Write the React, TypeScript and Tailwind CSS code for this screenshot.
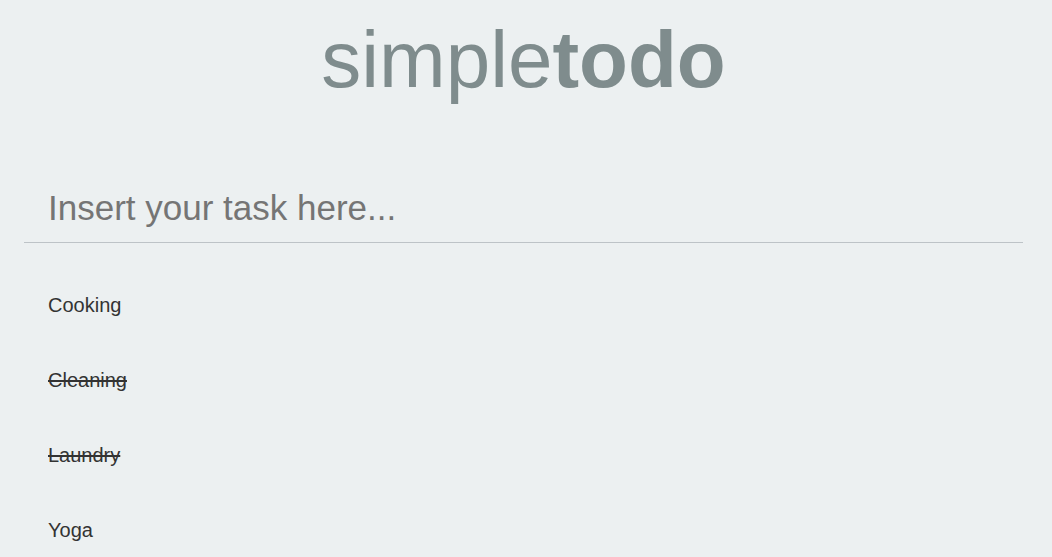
export default function App() {
  const tasks = [
    { name: "Cooking", done: false },
    { name: "Cleaning", done: true },
    { name: "Laundry", done: true },
    { name: "Yoga", done: false },
  ];

  return (
    <div className="min-h-screen bg-[#ecf0f1] pr-[5px] font-['Liberation_Sans',Arial,sans-serif]">
      {/* Title */}
      <h1 className="pt-[14px] text-center text-[80px] leading-[92px] text-[#7f8c8d]">
        simple<span className="font-bold">todo</span>
      </h1>

      <div className="mx-6 mt-[82px]">
        {/* Input */}
        <input
          type="text"
          placeholder="Insert your task here..."
          className="w-full border-b border-[#bdc3c7] bg-transparent px-6 pb-[14px] text-[35px] leading-[40px] text-[#333] outline-none placeholder:text-[#757575]"
        />

        {/* Tasks */}
        <ul className="mt-[50px]">
          {tasks.map((t) => (
            <li
              key={t.name}
              className={`px-6 h-[75px] text-[20px] leading-[24px] text-[#333] ${t.done ? "line-through" : ""}`}
            >
              {t.name}
            </li>
          ))}
        </ul>
      </div>
    </div>
  );
}
